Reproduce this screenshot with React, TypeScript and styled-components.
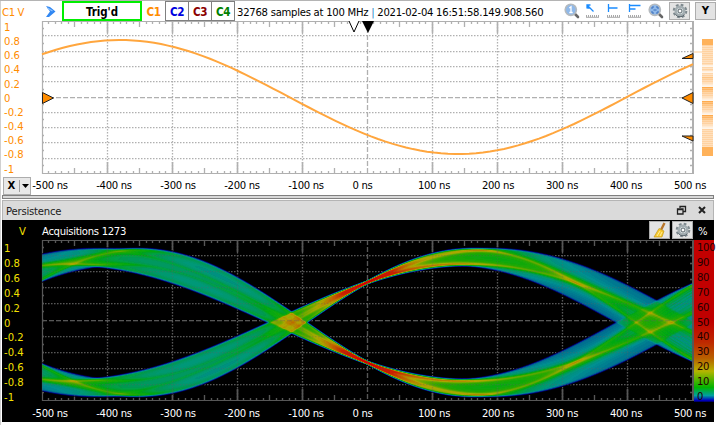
import React from "react";
import styled, { createGlobalStyle } from "styled-components";

const Global = createGlobalStyle`
  body { margin: 0; background: #fff; overflow: hidden; }
  * { box-sizing: border-box; }
`;

const ORANGE = "#ff8c00";

const Window = styled.div`
  width: 716px;
  height: 425px;
  padding-left: 2px;
  border-top: 1px solid #b4b4b4;
  background: #fff;
  box-shadow: inset 1px 0 0 #d0d0d0;
  font: 11.2px/14px "DejaVu Sans Condensed", "DejaVu Sans", sans-serif;
  font-stretch: condensed;
  color: #000;
  display: flex;
  flex-direction: column;
  overflow: hidden;
  white-space: nowrap;
`;
const Toolbar = styled.div`
  height: 20px;
  flex: none;
  display: flex;
  align-items: center;
`;
const ChannelUnit = styled.div`
  width: 44px;
  color: ${ORANGE};
  padding-top: 3px;
  letter-spacing: -0.4px;
`;
const RunIcon = styled.svg`
  width: 10px;
  height: 13px;
  margin-right: 6px;
`;
const TriggerState = styled.div`
  width: 80px;
  height: 20px;
  border: 2px solid #00ee00;
  font-weight: bold;
  font-size: 11.4px;
  text-align: center;
  line-height: 18px;
`;
const Channel = styled.div<{ $color: string; $flat?: boolean }>`
  width: ${(p) => (p.$flat ? 23 : 24)}px;
  margin-right: ${(p) => (p.$flat ? 0 : -1)}px;
  height: 20px;
  border: ${(p) => (p.$flat ? "0" : "1px solid #808080")};
  color: ${(p) => p.$color};
  font-weight: bold;
  font-size: 11.6px;
  letter-spacing: -0.5px;
  line-height: ${(p) => (p.$flat ? 22 : 20)}px;
  text-align: center;
`;
const Info = styled.div`
  width: 330px;
  padding: 3px 0 0 3px;
  letter-spacing: -0.26px;
`;
const Sep = styled.span`
  color: #2080c8;
`;
const Tools = styled.div`
  display: flex;
  align-items: center;
  flex: 1;
`;
const ToolIcon = styled.svg`
  width: 16px;
  height: 16px;
  margin-right: 5px;
  flex: none;
  overflow: visible;
`;
const ButtonIcon = styled.svg`
  width: 16px;
  height: 16px;
  flex: none;
`;
const ToolButton = styled.div`
  width: 21px;
  height: 18px;
  border: 1px solid #adadad;
  background: #e3e3e3;
  display: flex;
  align-items: center;
  justify-content: center;
  font-weight: bold;
  flex: none;
`;
const ChartRow = styled.div<{ $h: number }>`
  display: flex;
  height: ${(p) => p.$h}px;
  flex: none;
`;
const Scale = styled.div<{ $color: string; $step: number; $top: number }>`
  width: 40px;
  padding: ${(p) => p.$top}px 0 0 2px;
  color: ${(p) => p.$color};
  line-height: ${(p) => p.$step}px;
`;
const Plot = styled.svg<{ $h: number }>`
  width: 652px;
  height: ${(p) => p.$h}px;
  flex: none;
  display: block;
  overflow: visible;
`;
const Histogram = styled.svg`
  width: 20px;
  height: 154px;
  flex: none;
`;
const TimeRow = styled.div<{ $h: number; $dark?: boolean }>`
  height: ${(p) => p.$h}px;
  padding-top: ${(p) => (p.$dark ? 4 : 2)}px;
  flex: none;
  display: flex;
  align-items: center;
  color: ${(p) => (p.$dark ? "#fff" : "#000")};
`;
const AxisButton = styled.div`
  width: 28px;
  height: 18px;
  flex: none;
  margin: 0 0 0 1px;
  border: 1px solid #adadad;
  background: #e8e8e8;
  display: grid;
  grid-template-columns: 15px 1px 1fr;
  align-items: center;
  justify-items: center;
  font-weight: bold;
`;
const Divider = styled.i`
  width: 1px;
  height: 12px;
  background: #a0a0a0;
`;
const Times = styled.div<{ $indent: number }>`
  margin-left: ${(p) => p.$indent}px;
  flex: none;
  display: grid;
  grid-template-columns: repeat(11, 64px);
`;
const Time = styled.span<{ $origin: boolean }>`
  width: ${(p) => (p.$origin ? 45 : 60)}px;
  text-align: center;
  letter-spacing: -0.3px;
`;
const Splitter = styled.div`
  height: 4px;
  flex: none;
  width: 712px;
  background: #d8d8d8;
  border: 1px solid #808080;
`;
const PanelHeader = styled.div`
  width: 712px;
  height: 20px;
  flex: none;
  margin-top: 1px;
  border: 1px solid #b4b4b4;
  border-width: 1px 1px 0;
  background: #dadada;
  padding: 2px 0 0 3px;
  letter-spacing: -0.2px;
  display: flex;
  align-items: center;
  color: #202020;
`;
const HeaderIcons = styled.svg`
  width: 34px;
  height: 12px;
  margin: -3px 3px 0 auto;
`;
const DarkPanel = styled.div`
  width: 712px;
  height: 202px;
  flex: none;
  background: #000;
  color: #fff;
  display: flex;
  flex-direction: column;
`;
const DarkBar = styled.div`
  height: 20px;
  flex: none;
  display: flex;
  align-items: center;
  gap: 2px;
`;
const DarkUnit = styled.div`
  width: 38px;
  padding: 4px 0 0 17px;
  color: #f5e000;
`;
const Acquisitions = styled.div`
  flex: 1;
  padding-top: 4px;
  letter-spacing: -0.3px;
`;
const Percent = styled.div`
  width: 19px;
  padding: 4px 0 0 3px;
`;
const ColorBar = styled.div`
  width: 20px;
  height: 162px;
  padding: 1px 0 0 3px;
  flex: none;
  color: #200;
  letter-spacing: -0.3px;
  line-height: 14.9px;
  background: linear-gradient(#c40000 0%, #c00000 50%, #be2800 63%, #b86000 73%, #b4b400 81%, #00b400 91%, #00a0a0 96%, #0000c0 99%, #000050 100%);
`;

const AMPS = ["1", "0.8", "0.6", "0.4", "0.2", "0", "-0.2", "-0.4", "-0.6", "-0.8", "-1"];
const TIMES = [-500, -400, -300, -200, -100, 0, 100, 200, 300, 400, 500];
const PERCENTS = [100, 90, 80, 70, 60, 50, 40, 30, 20, 10, 0];

function Grid({ height, color }: { height: number; color: string }) {
  const mid = Math.round(height / 2) - 0.5;
  const minor: string[] = [];
  for (let i = 1; i < 100; i++) {
    if (i % 10 === 0) continue;
    const x = Math.floor(i * 6.5) + 0.5;
    const l = i % 5 === 0 ? 6 : 3;
    minor.push(`M${x} 0v${l}M${x} ${height}v${-l}`);
  }
  let side = "";
  for (let i = 1; i < 20; i++) {
    const y = Math.round((i * height) / 20) - 0.5;
    side += `M0 ${y}h2M651 ${y}h-3`;
  }
  return (
    <g stroke={color} fill="none">
      {[1, 2, 3, 4, 5, 6, 7, 8, 9].map((i) => {
        const center = i === 5;
        const y = center ? mid : Math.round((i * height) / 10) - 0.5;
        const dash = center ? "5 2" : "1.5 1.5";
        return (
          <g key={i}>
            <path d={`M0 ${y}H651`} strokeDasharray={dash} strokeWidth="1.25" />
            <path d={`M${i * 65 + 0.5} 0V${height}`} strokeDasharray={dash} strokeWidth="1.3" />
            <path d={`M${i * 65 + 0.5} 0v12m0 ${height - 24}v12`} strokeWidth={center ? 0 : 1.6} />
          </g>
        );
      })}
      <path d={minor.join("") + side} strokeWidth="1.3" />
      <path d={`M0.5 0V${height}M0 0.5H651M0 ${height - 0.5}H651`} strokeWidth="1.2" />
      <path d={`M651 0V${height}`} strokeWidth="2" />
    </g>
  );
}

function sinePath() {
  const pts: string[] = [];
  for (let x = 0; x <= 651; x += 7) {
    const y = 76 - 57 * Math.sin(((x - 585) / 676) * 2 * Math.PI);
    pts.push(`${x} ${y.toFixed(1)}`);
  }
  return "M" + pts.join("L");
}

/* Persistence map: trigger-aligned sine sweeps with varying amplitude and period. */
const W = 650;
const H = 160;
const STOPS: [number, number, number, number][] = [
  [0, 0, 0, 0],
  [0.004, 0, 0, 120],
  [0.015, 0, 80, 150],
  [0.037, 0, 145, 140],
  [0.078, 0, 165, 20],
  [0.12, 40, 165, 0],
  [0.185, 170, 170, 0],
  [0.26, 190, 100, 0],
  [0.36, 200, 30, 0],
  [1, 210, 0, 0],
];
function heat(v: number) {
  let i = 1;
  while (i < STOPS.length - 1 && STOPS[i][0] < v) i++;
  const a = STOPS[i - 1];
  const b = STOPS[i];
  const t = Math.min(1, (v - a[0]) / (b[0] - a[0]));
  const q = (k: number) => Math.round((a[k] + (b[k] - a[k]) * t) / 8) * 8;
  return `rgb(${q(1)},${q(2)},${q(3)})`;
}
function persistence(): [string, string][] {
  const d = new Float32Array(W * H);
  const n = 16;
  const sweeps: [number, number, number][] = [];
  let total = 0;
  for (let i = 0; i < n; i++) {
    for (let j = 0; j < n; j++) {
      const ca = Math.cos(((i + 0.5) / n) * Math.PI);
      const ct = Math.cos(((j + 0.5) / n) * Math.PI);
      const w = 1 + 1.6 * Math.exp(-((ca + ct) ** 2) * 6);
      sweeps.push([65.5 + 7.5 * ca, 732 + 72 * ct, w]);
      total += w;
    }
  }
  for (const [amp, period, w] of sweeps) {
    const phase = Math.asin(40 / amp);
    for (let x = 0; x < W; x++) {
      const v = amp * Math.sin(((x - 324.5) / period) * 2 * Math.PI + phase);
      const rate = x < 220 ? 0.8 : x < 260 ? 0.8 + (x - 220) * 0.0085 : 1.14;
      for (const y of [82 - v, 82 + v]) {
        const c = Math.round(y);
        for (let k = -2; k <= 2; k++) {
          const p = c + k;
          if (p >= 0 && p < H) d[p * W + x] += (w / total) * rate * Math.exp(-((p - y) ** 2) / 1.3);
        }
      }
    }
  }
  const paths: Record<string, string> = {};
  for (let y = 0; y < H; y++) {
    let start = 0;
    let color = heat(d[y * W]);
    for (let x = 1; x <= W; x++) {
      const next = x < W ? heat(d[y * W + x]) : "";
      if (next !== color) {
        if (color !== "rgb(0,0,0)") paths[color] = (paths[color] ?? "") + `M${start} ${y}.5h${x - start}`;
        start = x;
        color = next;
      }
    }
  }
  return Object.entries(paths);
}
const HEATMAP = persistence();

const BARS = Array.from({ length: 51 }, (_, i) => ({
  y: 24 + i * 2,
  o: i > 15 && i < 42 ? [0.85, 0.5, 0.15, 0.6, 0.3, 0.75, 0.45][(i * 5) % 7] : i < 8 || i > 42 ? 0.45 : [0.45, 0.15, 0.4][i % 3],
}));

function Gear() {
  return (
    <ButtonIcon viewBox="0 0 16 16">
      <circle cx="8" cy="8" r="6" fill="none" stroke="#7d888d" strokeWidth="2.6" strokeDasharray="2.6 2.11" />
      <circle cx="8" cy="8" r="4.3" fill="#d8e0e2" stroke="#a3adb1" strokeWidth="2.4" />
      <circle cx="8" cy="8" r="2" fill="#fff" stroke="#59656b" />
      <path d="M3.5 11.5a5.6 5.6 0 0 0 9 0" fill="none" stroke="#566269" />
    </ButtonIcon>
  );
}
function Lens({ one }: { one?: boolean }) {
  return (
    <ToolIcon viewBox="0 0 16 16">
      <path d="M11 11L14 14" stroke="#666" strokeWidth="2.6" strokeLinecap="round" />
      <circle cx="6.8" cy="6.8" r="5.6" fill="#8fb9ea" stroke="#b5babe" strokeWidth="1.6" />
      {one ? (
        <path d="M5.3 5L7 3.8V9.5M5.3 9.5h3.4" stroke="#fff" fill="none" strokeWidth="1.3" />
      ) : (
        <path d="M4 6V4h2M8 4h2v2M10 8v2H8M6 10H4V8M5.5 7h3" stroke="#3c6fb9" fill="none" />
      )}
    </ToolIcon>
  );
}
function Ruler({ d }: { d: string }) {
  return (
    <ToolIcon viewBox="0 0 16 16">
      <path d={d} stroke="#1a8cff" fill="none" strokeWidth="1.3" />
      <path d="M1 13h13" stroke="#a8a8a8" strokeWidth="2" strokeDasharray="1 1" />
      <path d="M1 14.3h13" stroke="#a8a8a8" />
    </ToolIcon>
  );
}
function TimeLabels({ indent }: { indent: number }) {
  return (
    <Times $indent={indent}>
      {TIMES.map((t) => (
        <Time key={t} $origin={t === 0}>{t} ns</Time>
      ))}
    </Times>
  );
}

export default function App() {
  return (
    <Window>
      <Global />
      <Toolbar>
        <ChannelUnit>C1 V</ChannelUnit>
        <RunIcon viewBox="0 0 10 13">
          <path d="M0 1l4 1 5.5 4.5L3 12H0l4-5.5z" fill="#3187f2" />
          <path d="M1.5 3l5 3" stroke="#8cc2ff" strokeWidth="1.2" />
        </RunIcon>
        <TriggerState>Trig'd</TriggerState>
        <Channel $color={ORANGE} $flat>C1</Channel>
        <Channel $color="#0000e0">C2</Channel>
        <Channel $color="#8b0000">C3</Channel>
        <Channel $color="#008000">C4</Channel>
        <Info>32768 samples at 100 MHz <Sep>|</Sep> 2021-02-04 16:51:58.149.908.560</Info>
        <Tools>
          <Lens one />
          <Ruler d="M2 5.5V2h3.5M2.3 2.3L8.5 8.5M3 2v3h2" />
          <Ruler d="M2.5 1v8M2.5 5h9" />
          <Ruler d="M2.5 1v8M2.5 2.5h11M2.5 6h6" />
          <Lens />
          <ToolButton><Gear /></ToolButton>
        </Tools>
        <ToolButton>Y</ToolButton>
      </Toolbar>
      <ChartRow $h={154}>
        <Scale $color={ORANGE} $step={14.15} $top={0}>
          {AMPS.map((a) => <div key={a}>{a}</div>)}
        </Scale>
        <Plot $h={154} viewBox="0 0 652 154">
          <Grid height={153} color="#b0b0b0" />
          <path d={sinePath()} fill="none" stroke="#ffa63e" strokeWidth="2" />
          <path d="M307 0L312 11 317 0" fill="#fff" stroke="#000" />
          <path d="M320 0H332L326 12z" fill="#000" />
          <g fill={ORANGE} stroke="#222">
            <path d="M0.5 71.5v11l11-5.5z" />
            <path d="M651 71.5v11l-11-5.5z" />
            <path d="M651 32.5v5h-11z" />
            <path d="M651 120v-5h-11z" />
          </g>
        </Plot>
        <Histogram viewBox="0 0 20 154">
          <rect x="8" y="18" width="11" height="6" fill="#ffb25a" />
          <path d="M0 31H8" stroke="#ffcf99" />
          {BARS.map((b) => (
            <rect key={b.y} x="8" y={b.y} width="11" height="1.7" fill="#ff9c2e" opacity={b.o} />
          ))}
          <rect x="8" y="126" width="11" height="9" fill="#ffb25a" />
        </Histogram>
      </ChartRow>
      <TimeRow $h={20}>
        <AxisButton>
          X<Divider />
          <svg width="7" height="4" viewBox="0 0 7 4"><path d="M0 0h7L3.5 4z" /></svg>
        </AxisButton>
        <TimeLabels indent={-11} />
      </TimeRow>
      <Splitter />
      <PanelHeader>
        Persistence
        <HeaderIcons viewBox="0 0 34 12">
          <path d="M4 4V2.5h5.5v5H7.5M1.5 5h5.5v5h-5.5zM4 2.5h6M1 5.5h6" fill="none" stroke="#222" strokeWidth="1.3" />
          <path d="M23 3l6 6M29 3l-6 6" stroke="#222" strokeWidth="2" />
        </HeaderIcons>
      </PanelHeader>
      <DarkPanel>
        <DarkBar>
          <DarkUnit>V</DarkUnit>
          <Acquisitions>Acquisitions 1273</Acquisitions>
          <ToolButton>
            <svg width="15" height="16" viewBox="0 0 15 16">
              <path d="M12.5 1L9 8" stroke="#b8752a" strokeWidth="2.4" />
              <path d="M7 6.5l5 2.5-2 6H2z" fill="#f7c92e" stroke="#c59a18" strokeWidth=".7" />
              <path d="M8 9l-3 5M10 10l-2 4" stroke="#fff09a" />
            </svg>
          </ToolButton>
          <ToolButton><Gear /></ToolButton>
          <Percent>%</Percent>
        </DarkBar>
        <ChartRow $h={162}>
          <Scale $color="#f5e000" $step={14.9} $top={2}>
            {AMPS.map((a) => <div key={a}>{a}</div>)}
          </Scale>
          <Plot $h={162} viewBox="0 0 652 162">
            <Grid height={161} color="#545454" />
            <g strokeWidth="1" shapeRendering="crispEdges">
              {HEATMAP.map(([color, d]) => <path key={color} d={d} stroke={color} />)}
            </g>
            <g opacity=".3"><Grid height={161} color="#606060" /></g>
          </Plot>
          <ColorBar>
            {PERCENTS.map((p) => <div key={p}>{p}</div>)}
          </ColorBar>
        </ChartRow>
        <TimeRow $h={20} $dark>
          <TimeLabels indent={18} />
        </TimeRow>
      </DarkPanel>
    </Window>
  );
}
